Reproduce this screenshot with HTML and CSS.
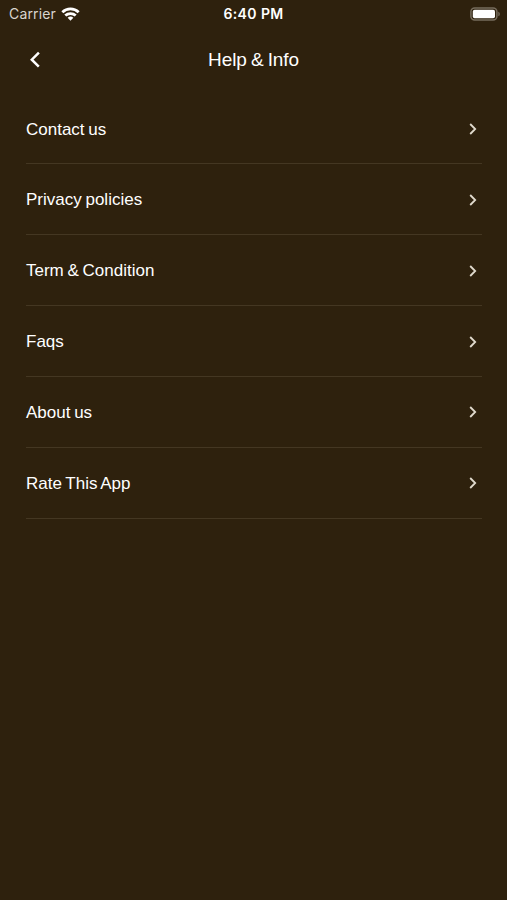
FILE: index.html
```html
<!DOCTYPE html>
<html lang="en">
<head>
<meta charset="utf-8">
<title>Help &amp; Info</title>
<link rel="stylesheet" href="styles.css">
</head>
<body>
<div class="status">
  <div class="carrier"><span class="carrier-name">Carrier</span>
    <svg class="wifi" width="19" height="14" viewBox="0 0 20 14"><g fill="none" stroke="#fff" stroke-width="2.9"><path d="M1.4 5.2a12.4 12.4 0 0 1 17.2 0"/><path d="M4.5 8.7a8 8 0 0 1 11 0"/></g><path fill="#fff" d="M10 14l-3-3.1a4.4 4.4 0 0 1 6 0z"/></svg>
  </div>
  <div class="time"><span class="time-text">6:40 PM</span></div>
  <svg class="battery" width="31" height="14" viewBox="0 0 31 14"><rect x=".9" y=".9" width="26" height="12.2" rx="3.8" fill="none" stroke="#766c5c" stroke-width="1.5"/><rect x="2.8" y="2.8" width="22.2" height="8.4" rx="1.8" fill="#fff"/><path d="M28.3 4.7c2 .7 2 3.9 0 4.6z" fill="#766c5c"/></svg>
</div>
<header class="header">
  <svg class="back" width="12" height="18" viewBox="0 0 12 18"><path d="M9.9 1.7L2.8 8.7l7 7" fill="none" stroke="#fff" stroke-width="2.5"/></svg>
  <h1 class="title"><span class="title-text">Help &amp; Info</span></h1>
</header>
<main class="list">
  <div class="row"><span class="label">Contact us</span><svg class="chevron" width="8" height="12" viewBox="0 0 8 12"><path d="M1.2 1l5 5-5 5"/></svg></div>
  <div class="row"><span class="label">Privacy policies</span><svg class="chevron" width="8" height="12" viewBox="0 0 8 12"><path d="M1.2 1l5 5-5 5"/></svg></div>
  <div class="row"><span class="label">Term &amp; Condition</span><svg class="chevron" width="8" height="12" viewBox="0 0 8 12"><path d="M1.2 1l5 5-5 5"/></svg></div>
  <div class="row"><span class="label">Faqs</span><svg class="chevron" width="8" height="12" viewBox="0 0 8 12"><path d="M1.2 1l5 5-5 5"/></svg></div>
  <div class="row"><span class="label">About us</span><svg class="chevron" width="8" height="12" viewBox="0 0 8 12"><path d="M1.2 1l5 5-5 5"/></svg></div>
  <div class="row"><span class="label">Rate This App</span><svg class="chevron" width="8" height="12" viewBox="0 0 8 12"><path d="M1.2 1l5 5-5 5"/></svg></div>
</main>
</body>
</html>
```
FILE: styles.css
```css
* { box-sizing: border-box; }
body {
  margin: 0;
  height: 900px;
  background: #2e210d;
  color: #fff;
  font-family: "Liberation Sans", sans-serif;
  overflow: hidden;
}
.status {
  display: grid;
  grid-template-columns: 1fr auto 1fr;
  align-items: center;
  height: 27px;
  padding: 0 6px 0 9px;
  font-family: Inter, "Liberation Sans", sans-serif;
}
.carrier { display: flex; align-items: center; gap: 5px; font-size: 14px; letter-spacing: .15px; color: #d9d5ce; }
.time { font-size: 14px; font-weight: 600; letter-spacing: .4px; margin-left: -3px; }
.battery { justify-self: end; }
.header {
  display: grid;
  grid-template-columns: 1fr auto 1fr;
  align-items: center;
  height: 66.6px;
  padding: 0 29px;
}
.title { margin: -1px 0 0; font-size: 19px; font-weight: 400; letter-spacing: -.1px; word-spacing: -1px; }
.list { padding: 0 25px 0 26px; }
.row {
  display: flex;
  align-items: center;
  justify-content: space-between;
  height: 70.85px;
  padding-right: 5px;
  border-bottom: 1px solid #443722;
  font-size: 17px;
  letter-spacing: 0;
  word-spacing: -1px;
}
.label { padding-top: 2px; }
.chevron { fill: none; stroke: #e0dacd; stroke-width: 1.8; margin-top: 1px; }
```
